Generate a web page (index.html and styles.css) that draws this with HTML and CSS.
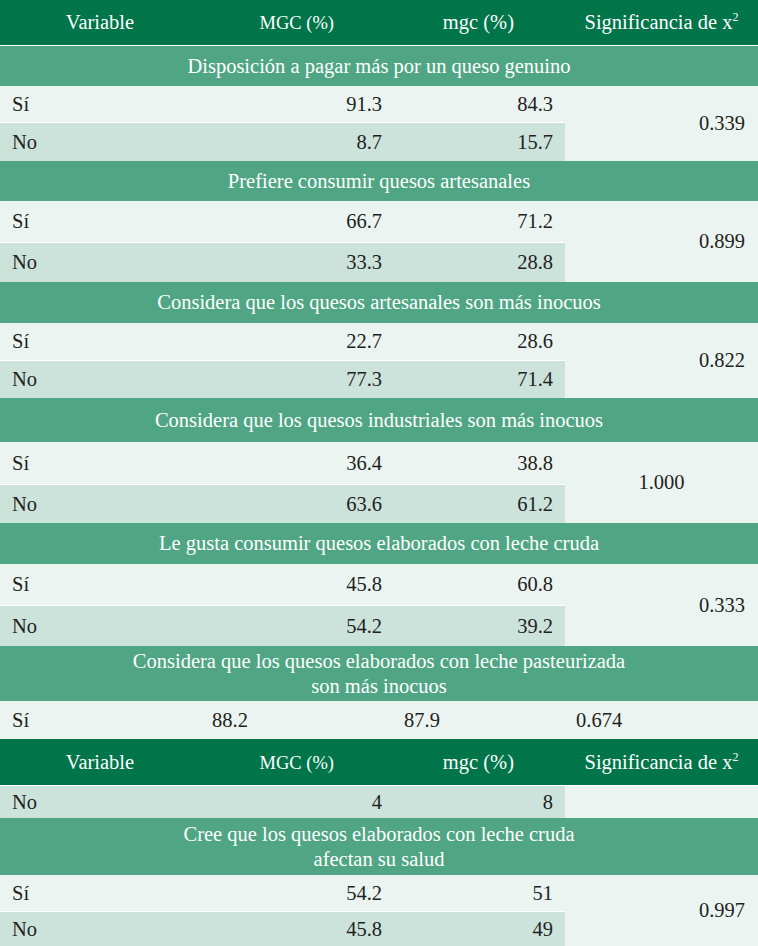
FILE: index.html
```html
<!DOCTYPE html>
<html lang="es">
<head>
<meta charset="utf-8">
<link rel="stylesheet" href="styles.css">
</head>
<body>
<table class="tbl">
  <colgroup>
    <col class="c1"><col class="c2"><col class="c3"><col class="c4">
  </colgroup>
  <tr class="hd h46">
    <th>Variable</th><th><span class="sc">MGC (%)</span></th><th>mgc (%)</th><th>Significancia de x<sup>2</sup></th>
  </tr>
  <tr class="sec h40"><td colspan="4">Disposición a pagar más por un queso genuino</td></tr>
  <tr class="si h37"><td class="lab">Sí</td><td class="num">91.3</td><td class="num">84.3</td><td class="sig" rowspan="2">0.339</td></tr>
  <tr class="no h38"><td class="lab">No</td><td class="num">8.7</td><td class="num">15.7</td></tr>

  <tr class="sec h40"><td colspan="4">Prefiere consumir quesos artesanales</td></tr>
  <tr class="si h42"><td class="lab">Sí</td><td class="num">66.7</td><td class="num">71.2</td><td class="sig" rowspan="2">0.899</td></tr>
  <tr class="no h39"><td class="lab">No</td><td class="num">33.3</td><td class="num">28.8</td></tr>

  <tr class="sec h41"><td colspan="4">Considera que los quesos artesanales son más inocuos</td></tr>
  <tr class="si h38"><td class="lab">Sí</td><td class="num">22.7</td><td class="num">28.6</td><td class="sig" rowspan="2">0.822</td></tr>
  <tr class="no h37"><td class="lab">No</td><td class="num">77.3</td><td class="num">71.4</td></tr>

  <tr class="sec h44"><td colspan="4">Considera que los quesos industriales son más inocuos</td></tr>
  <tr class="si h43"><td class="lab">Sí</td><td class="num">36.4</td><td class="num">38.8</td><td class="sig mid" rowspan="2">1.000</td></tr>
  <tr class="no h38"><td class="lab">No</td><td class="num">63.6</td><td class="num">61.2</td></tr>

  <tr class="sec h41"><td colspan="4">Le gusta consumir quesos elaborados con leche cruda</td></tr>
  <tr class="si h42"><td class="lab">Sí</td><td class="num">45.8</td><td class="num">60.8</td><td class="sig" rowspan="2">0.333</td></tr>
  <tr class="no h40"><td class="lab">No</td><td class="num">54.2</td><td class="num">39.2</td></tr>

  <tr class="sec h55"><td colspan="4">Considera que los quesos elaborados con leche pasteurizada<br>son más inocuos</td></tr>
  <tr class="si flat h38"><td class="lab">Sí</td><td class="left">88.2</td><td class="left">87.9</td><td class="left">0.674</td></tr>

  <tr class="hd h47">
    <th>Variable</th><th><span class="sc">MGC (%)</span></th><th>mgc (%)</th><th>Significancia de x<sup>2</sup></th>
  </tr>
  <tr class="no h32"><td class="lab">No</td><td class="num">4</td><td class="num">8</td><td class="sig"></td></tr>

  <tr class="sec h57"><td colspan="4">Cree que los quesos elaborados con leche cruda<br>afectan su salud</td></tr>
  <tr class="si h37"><td class="lab">Sí</td><td class="num">54.2</td><td class="num">51</td><td class="sig" rowspan="2">0.997</td></tr>
  <tr class="no h34"><td class="lab">No</td><td class="num">45.8</td><td class="num">49</td></tr>
</table>
</body>
</html>
```

FILE: styles.css
```css
html, body {
  margin: 0;
  padding: 0;
  background: #ffffff;
}

.tbl {
  width: 758px;
  table-layout: fixed;
  border-collapse: separate;
  border-spacing: 0;
  font-family: "Liberation Serif", "DejaVu Serif", serif;
  font-size: 20.5px;
  color: #231f20;
}

.c1 { width: 200px; }
.c2 { width: 192px; }
.c3 { width: 173px; }
.c4 { width: 193px; }

.tbl th,
.tbl td {
  padding: 0;
  vertical-align: middle;
  box-sizing: border-box;
}

.hd th {
  background: #00754a;
  color: #ffffff;
  font-weight: normal;
  text-align: center;
  border-bottom: 1px solid #ffffff;
}

.hd th:nth-child(2),
.hd th:nth-child(3) {
  text-align: right;
}
.hd th:nth-child(2) { padding-right: 58px; }
.hd th:nth-child(3) { padding-right: 51px; }

.sc { font-size: 18.5px; }

.hd sup {
  font-size: 12px;
  vertical-align: 8px;
  line-height: 0;
}

.sec td {
  background: #50a684;
  color: #ffffff;
  text-align: center;
  line-height: 25px;
}

.si td { background: #ecf4f1; }
.si td.lab,
.si td.num { border-bottom: 1px solid #ffffff; }
.si.flat td { border-bottom: 0; }

.no td { background: #cce3dc; }

.lab { padding-left: 12px !important; }
.num { text-align: right; padding-right: 10px !important; }
.si .num:nth-child(3),
.no .num:nth-child(3) { padding-right: 12px !important; }

.sig {
  background: #ecf4f1 !important;
  text-align: right;
  padding-right: 13px !important;
}
.sig.mid { text-align: center; padding-right: 0 !important; }

.left { text-align: left; padding-left: 12px !important; }
.si.flat td.left:nth-child(4) { padding-left: 11px !important; }

.h32 { height: 32px; }
.h34 { height: 34px; }
.h37 { height: 37px; }
.h38 { height: 38px; }
.h39 { height: 39px; }
.h40 { height: 40px; }
.h41 { height: 41px; }
.h42 { height: 42px; }
.h43 { height: 43px; }
.h44 { height: 44px; }
.h46 { height: 46px; }
.h47 { height: 47px; }
.h55 { height: 55px; }
.h57 { height: 57px; }
```
